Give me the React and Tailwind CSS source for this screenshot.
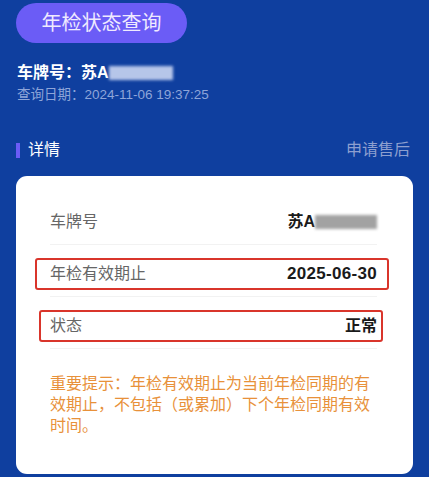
const font = { fontFamily: '"Liberation Sans", "Noto Sans CJK SC", sans-serif' };

function Blur({ className }) {
  return <span className={"inline-block align-middle blur-[1.5px] " + className} />;
}

function Row({ label, value, box }) {
  const inner = (
    <div className="flex flex-1 items-center justify-between">
      <span className="text-[16px] text-[#666]">{label}</span>
      <span className="text-[16px] font-bold text-[#1a1a1a]">{value}</span>
    </div>
  );
  return (
    <div className="flex h-[52px] items-center border-b border-[#f2f2f2] pt-[6px]">
      {box ? (
        <div className={"flex h-[32px] flex-1 items-center rounded-[3px] border-2 border-[#d9352b] " + box}>{inner}</div>
      ) : (
        inner
      )}
    </div>
  );
}

export default function App() {
  return (
    <div className="h-[477px] w-[429px] overflow-hidden bg-[#0f3f9f]" style={font}>
      <div className="px-4 pt-[3px]">
        <div className="flex h-[40px] w-[171px] items-center justify-center rounded-full bg-[#6b5cf6] text-[20px] text-[#efeaff]">
          年检状态查询
        </div>
      </div>

      <div className="mt-[18px] px-[17px]">
        <div className="flex items-center text-[16px] font-bold leading-[24px] text-white">
          车牌号：苏A<Blur className="h-[14px] w-[64px] bg-[#c9d5f2] opacity-90" />
        </div>
        <div className="text-[13.5px] leading-[20px] text-[#8ea5d9]">查询日期：2024-11-06 19:37:25</div>
      </div>

      <div className="mt-[35px] flex items-center justify-between px-4">
        <div className="flex items-center">
          <span className="h-[15px] w-[4px] bg-[#6b5cf6]" />
          <span className="ml-[8px] text-[16px] leading-[20px] text-white">详情</span>
        </div>
        <span className="mr-[3px] text-[16px] leading-[20px] text-[#8d9fcf]">申请售后</span>
      </div>

      <div className="mx-4 mt-[16px] rounded-[11px] bg-white pb-[38px] pl-[34px] pr-[36px] pt-[17px]">
        <Row
          label="车牌号"
          value={
            <span className="flex items-center">
              苏A<Blur className="h-[14px] w-[62px] bg-[#a2a2a2]" />
            </span>
          }
        />
        <Row label="年检有效期止" value={<span className="text-[17px] tracking-[0.3px]">2025-06-30</span>} box="-ml-[15px] -mr-[12px] pl-[13px] pr-[10px]" />
        <Row label="状态" value="正常" box="-ml-[11px] -mr-[6px] pl-[9px] pr-[4px]" />
        <p className="mt-[24px] text-[16px] leading-[21px] text-[#e8913a]">
          重要提示：年检有效期止为当前年检同期的有效期止，不包括（或累加）下个年检同期有效时间。
        </p>
      </div>
    </div>
  );
}
